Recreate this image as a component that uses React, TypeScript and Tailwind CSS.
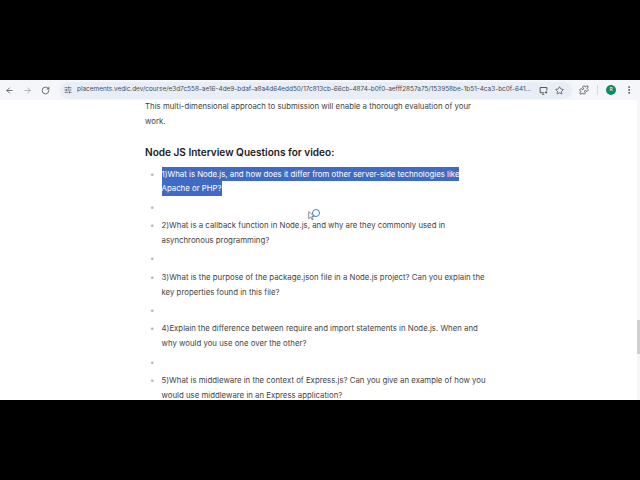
import React from 'react';
import { ArrowLeft, ArrowRight, RotateCw, Star, Puzzle, EllipsisVertical, SlidersHorizontal } from 'lucide-react';

const questions = [
  {
    lines: ['1)What is Node.js, and how does it differ from other server-side technologies like', 'Apache or PHP?'],
    selected: true,
  },
  { lines: [] },
  {
    lines: ['2)What is a callback function in Node.js, and why are they commonly used in', 'asynchronous programming?'],
  },
  { lines: [] },
  {
    lines: ['3)What is the purpose of the package.json file in a Node.js project? Can you explain the', 'key properties found in this file?'],
  },
  { lines: [] },
  {
    lines: ['4)Explain the difference between require and import statements in Node.js. When and', 'why would you use one over the other?'],
  },
  { lines: [] },
  {
    lines: ['5)What is middleware in the context of Express.js? Can you give an example of how you', 'would use middleware in an Express application?'],
  },
];

function Toolbar() {
  return (
    <div className="h-5 shrink-0 bg-[#f4f6fa] flex items-center text-[#474747]">
      <ArrowLeft size={9} strokeWidth={2} className="ml-[5px]" />
      <ArrowRight size={9} strokeWidth={2} className="ml-[9px] text-[#9aa0a6]" />
      <RotateCw size={9} strokeWidth={2} className="ml-[9px]" />
      <div className="ml-[10px] h-[17px] w-[512px] rounded-full bg-[#e9edf6] flex items-center">
        <SlidersHorizontal size={8} strokeWidth={2} className="ml-[4px]" />
        <span className="ml-[5px] w-[457px] whitespace-nowrap overflow-hidden text-[6.43px] text-[#4a4d52]">
          placements.vedic.dev/course/e3d7c558-ae16-4de9-bdaf-a8a4d64edd50/17c813cb-66cb-4874-b0f0-aefff2857a75/153958be-1b51-4ca3-bc0f-641...
        </span>
        <svg viewBox="0 0 12 12" className="ml-[5px] w-[9px] h-[9px]" fill="none" stroke="currentColor" strokeWidth="1.2">
          <path d="M10.5 6V2H1.5v7H7M4 11h3M8 8.5h3M9.5 7v3" />
        </svg>
        <Star size={9} strokeWidth={2} className="ml-[7px]" />
      </div>
      <Puzzle size={10} strokeWidth={2} className="ml-[7px]" />
      <div className="ml-[8px] w-px h-[10px] bg-[#d5d8de]" />
      <div className="ml-[8px] w-[10px] h-[10px] rounded-full bg-[#0f8a68] text-white text-[5px] flex items-center justify-center">
        R
      </div>
      <EllipsisVertical size={10} strokeWidth={2} className="ml-[8px]" />
    </div>
  );
}

export default function App() {
  return (
    <div className="w-[640px] h-[480px] bg-black flex flex-col py-20 font-['Inter',sans-serif]">
      <Toolbar />
      <div className="relative flex-1 bg-white overflow-hidden flex">
        <div className="flex-1 pl-[145px] pr-[150px] -mt-[1px] text-[7.82px] leading-[14.6px] text-[#444444]">
          <p>This multi-dimensional approach to submission will enable a thorough evaluation of your work.</p>
          <h2 className="mt-[17px] mb-[7px] text-[10.05px] font-semibold text-[#1c1c1c]">Node JS Interview Questions for video:</h2>
          <ul className="flex flex-col gap-[3.9px] w-[340px]">
            {questions.map((q, i) => (
              <li key={i} className="flex min-h-[14.6px]">
                <span className="w-[16.5px] shrink-0 pl-[5px] text-[#b5b5b5]">•</span>
                <div className="whitespace-nowrap">
                  {q.lines.map((line) => (
                    <div key={line}>
                      <span className={q.selected ? 'bg-[#3f6bc4] text-white inline-block' : ''}>{line}</span>
                    </div>
                  ))}
                </div>
              </li>
            ))}
          </ul>
        </div>
        <div className="w-[3.5px] bg-[#f6f6f6] flex flex-col pt-[220px]">
          <div className="h-[34px] bg-[#cfcfcf]" />
        </div>
        <div className="absolute left-[308px] top-[111px]">
          <svg viewBox="0 0 12 18" className="w-[7px] h-[10px]" fill="#fff" stroke="#555" strokeWidth="1.2">
            <path d="M1 1v13l3.5-3 2.5 5 2-1-2.5-5H11z" />
          </svg>
          <div className="absolute left-[3.5px] -top-[2.5px] w-[8px] h-[8px] rounded-full border-[1.5px] border-[#2a86d8]" />
        </div>
      </div>
    </div>
  );
}
